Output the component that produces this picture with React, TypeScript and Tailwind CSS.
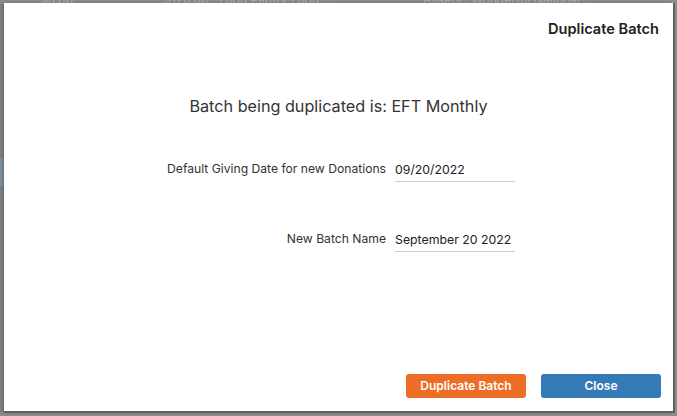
import React from "react";

const font = { fontFamily: "Inter, 'Noto Sans', sans-serif" };

function Field({ label, value }: { label: string; value: string }) {
  return (
    <div className="flex items-end">
      <div className="w-[391px] text-right text-[12.15px] text-[#333] pr-[9px] pb-[6px] leading-[14px]">{label}</div>
      <div className="w-[120px] border-b border-[#cfcfcf] pb-[3px] text-[12.3px] text-[#222] leading-[16px]">{value}</div>
    </div>
  );
}

export default function App() {
  return (
    <div className="relative w-[677px] h-[416px] overflow-hidden bg-[#8f8f8f]" style={font}>
      {/* page behind the dialog */}
      <div className="flex gap-[90px] pl-[40px] -mt-[9px] text-[12px] text-[#aab0b8] whitespace-nowrap">
        <span>$0.00</span>
        <span>$120.00 · Food Pantry Food ...</span>
        <span>Assets : Wonderful National ...</span>
        <span>Liabilities : Food Pantry : Food</span>
      </div>
      <div className="absolute left-0 top-[158px] w-[4px] h-[28px] bg-[#8fa0b0]" />

      {/* dialog */}
      <div className="absolute left-[4px] top-[3px] w-[671px] h-[410px] bg-white border-r-2 border-b-2 border-[#5f5f5f] shadow-[-3px_0_4px_rgba(0,0,0,0.25)] flex flex-col">
        <div className="flex justify-end pr-[14px] pt-[17px]">
          <h2 className="text-[14.6px] font-semibold text-[#222] leading-[18px]">Duplicate Batch</h2>
        </div>
        <div className="mt-[58px] text-center text-[16.2px] text-[#333] leading-[20px]">
          Batch being duplicated is: EFT Monthly
        </div>
        <div className="mt-[46px] flex flex-col gap-[50px]">
          <Field label="Default Giving Date for new Donations" value="09/20/2022" />
          <Field label="New Batch Name" value="September 20 2022" />
        </div>
        <div className="mt-auto mb-[13px] flex justify-end gap-[15px] pr-[12px]">
          <button className="w-[120px] h-[24px] rounded-[3px] bg-[#ec6e26] text-white text-[12px] font-semibold">
            Duplicate Batch
          </button>
          <button className="w-[120px] h-[24px] rounded-[3px] bg-[#337ab7] text-white text-[12px] font-semibold">
            Close
          </button>
        </div>
      </div>
    </div>
  );
}
